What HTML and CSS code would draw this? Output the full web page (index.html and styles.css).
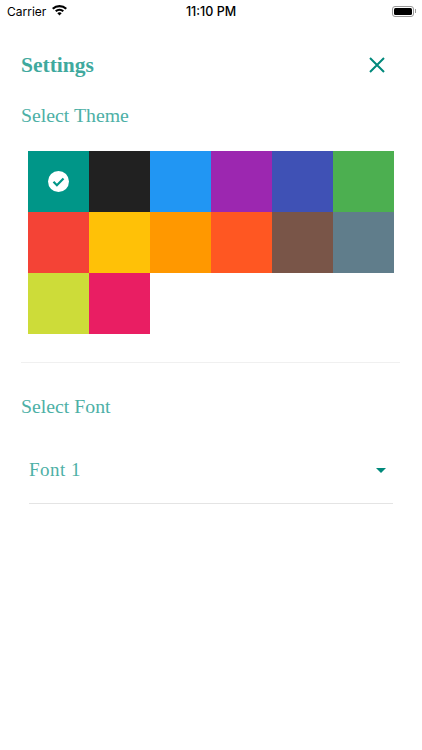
FILE: index.html
```html
<html>
  <head>
    <link rel="stylesheet" href="styles.css">
  </head>
  <body>
    <div class="status-bar">
      <div class="status-left">
        <span>Carrier</span>
        <svg class="wifi" width="15" height="11" viewBox="0 0 15 11">
          <path d="M7.500 0A11 11 0 0 0 0 3l1.500 1.600a8.800 8.800 0 0 1 12 0L15 3A11 11 0 0 0 7.500 0z" fill="#000" />
          <path d="M7.500 3.700a6.500 6.500 0 0 0-4.500 1.800l1.500 1.600a4.300 4.300 0 0 1 6 0L12 5.500a6.500 6.500 0 0 0-4.500-1.800z" fill="#000" />
          <path d="M7.500 7.300c-.9 0-1.600.3-2.200.9l2.200 2.400 2.200-2.400c-.6-.6-1.300-.9-2.200-.9z" fill="#000" />
        </svg>
      </div>
      <div class="status-time">11:10 PM</div>
      <div class="battery">
        <div class="battery-body"><div class="battery-fill"></div></div>
        <div class="battery-tip"></div>
      </div>
    </div>

    <div class="settings">
      <div class="header">
        <h1 class="title">Settings</h1>
        <svg class="close" width="16" height="16" viewBox="0 0 16 16">
          <path d="M1 1l14 14M15 1L1 15" stroke="#00897b" stroke-width="2" fill="none" />
        </svg>
      </div>

      <h2 class="label label-theme">Select Theme</h2>
      <div class="swatches">
        <div class="swatch teal">
          <svg width="21" height="21" viewBox="0 0 21 21">
            <circle cx="10.500" cy="10.500" r="10.500" fill="#fff" />
            <path d="M5.500 10.800l3.400 3.400 6.600-6.700" stroke="#009688" stroke-width="2.200" fill="none" />
          </svg>
        </div>
        <div class="swatch black"></div>
        <div class="swatch blue"></div>
        <div class="swatch purple"></div>
        <div class="swatch indigo"></div>
        <div class="swatch green"></div>
        <div class="swatch red"></div>
        <div class="swatch amber"></div>
        <div class="swatch orange"></div>
        <div class="swatch deep-orange"></div>
        <div class="swatch brown"></div>
        <div class="swatch blue-grey"></div>
        <div class="swatch lime"></div>
        <div class="swatch pink"></div>
      </div>

      <div class="divider"></div>

      <h2 class="label label-font">Select Font</h2>
      <div class="font-select">
        <span>Font 1</span>
        <div class="caret"></div>
      </div>
    </div>
  </body>
</html>
```

FILE: styles.css
```css
body {
  margin: 0;
  background: #fff;
  font-family: "Liberation Serif", serif;
}
.status-bar {
  display: grid;
  grid-template-columns: 1fr auto 1fr;
  align-items: center;
  height: 22px;
  padding: 0 7px;
  font-family: Inter, "Liberation Sans", sans-serif;
  font-size: 12px;
  color: #000;
}
.status-left {
  display: flex;
  align-items: center;
  gap: 6px;
}
.wifi {
  margin-top: -2px;
}
.status-time {
  font-weight: 500;
  font-size: 12.500px;
}
.battery {
  display: flex;
  align-items: center;
  justify-content: flex-end;
  gap: 1px;
  margin-right: -1px;
}
.battery-body {
  width: 22px;
  height: 11px;
  box-sizing: border-box;
  border: 1px solid #999;
  border-radius: 3px;
  padding: 1px;
}
.battery-fill {
  height: 100%;
  background: #000;
  border-radius: 1.500px;
}
.battery-tip {
  width: 1px;
  height: 4px;
  background: #999;
}
.settings {
  padding: 0 22px 0 21px;
}
.header {
  display: flex;
  justify-content: space-between;
  align-items: center;
  margin-top: 28px;
  height: 30px;
}
.close {
  margin-right: 15px;
}
.title {
  margin: 0;
  font-size: 21.500px;
  font-weight: bold;
  color: #3fa99e;
}
.label {
  margin: 0;
  font-size: 19.800px;
  font-weight: normal;
  color: #4db0a6;
}
.label-theme {
  margin-top: 24px;
}
.swatches {
  display: grid;
  grid-template-columns: repeat(6, 61px);
  grid-auto-rows: 61px;
  margin: 24px 0 0 7px;
}
.swatch {
  display: flex;
  align-items: center;
  justify-content: center;
}
.teal { background: #009688; }
.black { background: #212121; }
.blue { background: #2196f3; }
.purple { background: #9c27b0; }
.indigo { background: #3f51b5; }
.green { background: #4caf50; }
.red { background: #f44336; }
.amber { background: #ffc107; }
.orange { background: #ff9800; }
.deep-orange { background: #ff5722; }
.brown { background: #795548; }
.blue-grey { background: #607d8b; }
.lime { background: #cddc39; }
.pink { background: #e91e63; }
.divider {
  height: 1px;
  background: #f0f0f0;
  margin-top: 28px;
}
.label-font {
  margin-top: 32px;
}
.font-select {
  display: flex;
  justify-content: space-between;
  align-items: center;
  margin: 11px 7px 0 8px;
  height: 66px;
  padding-top: 8px;
  border-bottom: 1px solid #e4e4e4;
  font-size: 19px;
  letter-spacing: 0.500px;
  color: #4db0a6;
}
.caret {
  width: 0;
  height: 0;
  border-left: 5px solid transparent;
  border-right: 5px solid transparent;
  border-top: 5px solid #00897b;
  margin-right: 7px;
}
```
